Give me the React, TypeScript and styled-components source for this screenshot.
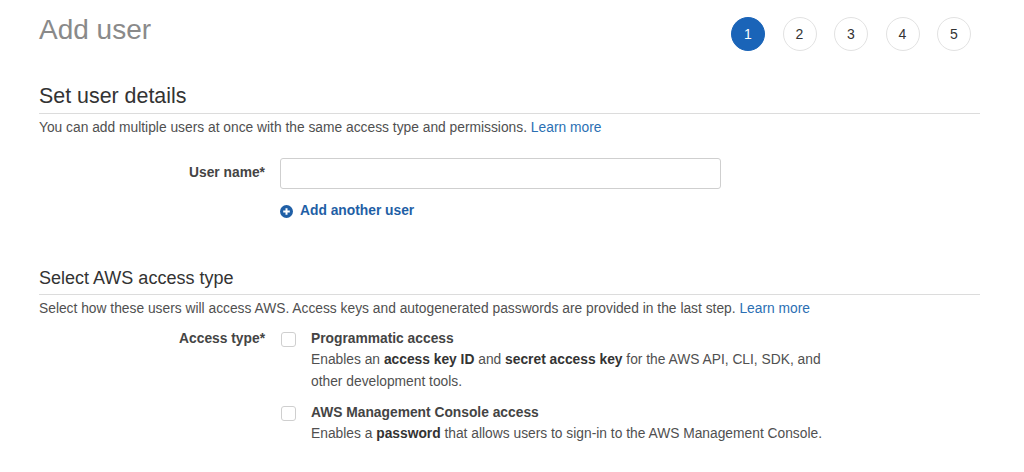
import React from "react";
import styled, { createGlobalStyle } from "styled-components";

const Global = createGlobalStyle`
  html, body { margin: 0; padding: 0; background: #fff; }
  body { font-family: "Liberation Sans", Arial, Helvetica, sans-serif; color: #444; }
  * { box-sizing: border-box; }
`;

const Page = styled.div`
  padding: 0 44px 0 39px;
  width: 1024px;
  height: 472px;
  overflow: hidden;
`;

const Header = styled.header`
  display: flex;
  justify-content: space-between;
  align-items: flex-start;
  padding-top: 14px;
`;

const Title = styled.h1`
  margin: 0;
  font-size: 28px;
  line-height: 32px;
  font-weight: 400;
  color: #8a8a8a;
`;

const Steps = styled.ol`
  display: flex;
  gap: 17.5px;
  list-style: none;
  margin: 3px 9px 0 0;
  padding: 0;
`;

const Step = styled.li<{ $active?: boolean }>`
  width: 34px;
  height: 34px;
  border-radius: 50%;
  display: flex;
  align-items: center;
  justify-content: center;
  font-size: 14px;
  color: ${(p) => (p.$active ? "#fff" : "#333")};
  background: ${(p) => (p.$active ? "#1a64b8" : "#fff")};
  border: 1px solid ${(p) => (p.$active ? "#1a64b8" : "#e2e2e2")};
`;

const SectionHeading = styled.h2<{ $size: number; $lh: number; $top: number }>`
  margin: ${(p) => p.$top}px 0 0;
  font-size: ${(p) => p.$size}px;
  line-height: ${(p) => p.$lh}px;
  font-weight: 400;
  color: #333;
  padding-bottom: 5px;
  border-bottom: 1px solid #dcdcdc;
`;

const Description = styled.p`
  margin: 5px 0 0;
  font-size: 13.8px;
  line-height: 18px;
  color: #505050;
`;

const Link = styled.a`
  color: #2b6fb3;
  text-decoration: none;
`;

const FormRow = styled.div<{ $top: number }>`
  display: grid;
  grid-template-columns: 226px 1fr;
  column-gap: 15px;
  align-items: start;
  margin-top: ${(p) => p.$top}px;
`;

const Label = styled.label<{ $pad: number }>`
  text-align: right;
  font-size: 13.8px;
  line-height: 18px;
  font-weight: 700;
  color: #444;
  padding-top: ${(p) => p.$pad}px;
`;

const TextInput = styled.input`
  width: 441px;
  height: 31px;
  border: 1px solid #cfcfcf;
  border-radius: 3px;
  padding: 0 8px;
  font: inherit;
  font-size: 13.8px;
  outline: none;
`;

const AddAnother = styled.a`
  display: flex;
  align-items: center;
  gap: 7px;
  margin: 13px 0 0 241px;
  font-size: 13.8px;
  line-height: 18px;
  font-weight: 700;
  color: #1f5fa6;
  text-decoration: none;
`;

const Options = styled.div`
  display: flex;
  flex-direction: column;
  gap: 10px;
`;

const Option = styled.div`
  display: flex;
  align-items: flex-start;
  gap: 15px;
  padding-left: 1px;
`;

const Checkbox = styled.span`
  flex: none;
  width: 15px;
  height: 15px;
  margin-top: 3px;
  border: 1px solid #cfcfcf;
  border-radius: 3px;
  background: #fff;
`;

const OptionText = styled.div`
  display: flex;
  flex-direction: column;
`;

const OptionTitle = styled.div`
  font-size: 13.8px;
  line-height: 20px;
  font-weight: 700;
  color: #444;
`;

const OptionDesc = styled.div`
  font-size: 13.8px;
  line-height: 22px;
  color: #505050;
  max-width: 515px;
  b { color: #333; }
`;

const PlusIcon = () => (
  <svg width="13" height="13" viewBox="0 0 13 13" aria-hidden>
    <circle cx="6.5" cy="6.5" r="6.5" fill="#1f5fa6" />
    <path d="M6.5 3.2v6.6M3.2 6.5h6.6" stroke="#fff" strokeWidth="2" />
  </svg>
);

export default function App() {
  return (
    <Page>
      <Global />
      <Header>
        <Title>Add user</Title>
        <Steps>
          {[1, 2, 3, 4, 5].map((n) => (
            <Step key={n} $active={n === 1}>
              {n}
            </Step>
          ))}
        </Steps>
      </Header>

      <SectionHeading $size={21.4} $lh={24} $top={33}>
        Set user details
      </SectionHeading>
      <Description>
        You can add multiple users at once with the same access type and permissions.{" "}
        <Link href="#">Learn more</Link>
      </Description>

      <FormRow $top={21}>
        <Label $pad={6}>User name*</Label>
        <TextInput type="text" />
      </FormRow>
      <AddAnother href="#">
        <PlusIcon />
        Add another user
      </AddAnother>

      <SectionHeading $size={18} $lh={22} $top={47}>
        Select AWS access type
      </SectionHeading>
      <Description>
        Select how these users will access AWS. Access keys and autogenerated passwords are
        provided in the last step. <Link href="#">Learn more</Link>
      </Description>

      <FormRow $top={11}>
        <Label $pad={1}>Access type*</Label>
        <Options>
          <Option>
            <Checkbox />
            <OptionText>
              <OptionTitle>Programmatic access</OptionTitle>
              <OptionDesc>
                Enables an <b>access key ID</b> and <b>secret access key</b> for the AWS API, CLI,
                SDK, and other development tools.
              </OptionDesc>
            </OptionText>
          </Option>
          <Option>
            <Checkbox />
            <OptionText>
              <OptionTitle>AWS Management Console access</OptionTitle>
              <OptionDesc>
                Enables a <b>password</b> that allows users to sign-in to the AWS Management
                Console.
              </OptionDesc>
            </OptionText>
          </Option>
        </Options>
      </FormRow>
    </Page>
  );
}
